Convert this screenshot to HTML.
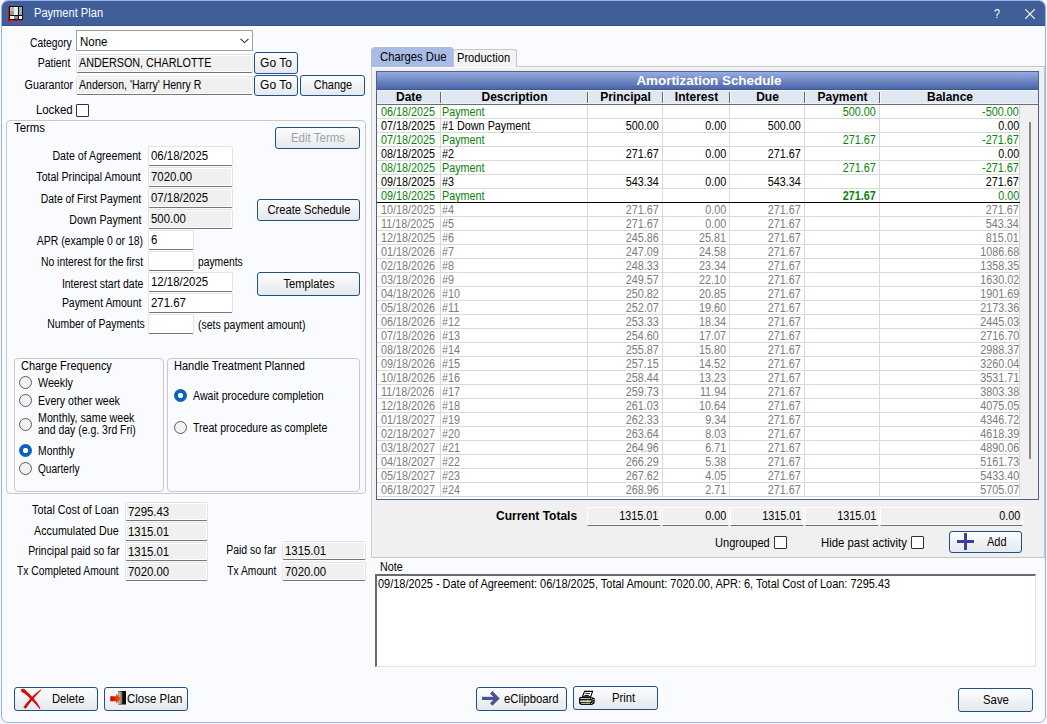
<!DOCTYPE html><html><head><meta charset="utf-8"><style>
*{margin:0;padding:0;box-sizing:border-box}
html,body{width:1047px;height:724px;overflow:hidden;background:#f8f8f8}
body{position:relative;font-family:"Liberation Sans",sans-serif;font-size:12px;color:#000}
div{position:absolute}
.t{white-space:nowrap;line-height:1}
.frame{left:1px;top:0;width:1045px;height:723px;background:#fafbfe;border:1px solid #9bb2e6;border-radius:7px}
.title{left:2px;top:1px;width:1043px;height:25px;background:#405e98;border-radius:6px 6px 0 0;border-bottom:1px solid #35528c}
.content{left:2px;top:26px;width:1043px;height:1px;background:#fff}
.btn{border:1px solid #1d4f88;border-radius:3px;background:linear-gradient(#fcfdfd,#e5e9ed)}
.tb{background:#fff;border:1px solid #e3e3e3;border-bottom:1px solid #767676;border-radius:2px;box-shadow:inset 1px 1px 0 #fff,inset -1px -1px 0 #fff}
.tb.ro{background:#f0f0f0}
.chk{background:#fff;border:1px solid #333;border-radius:1px}
.rad{border-radius:50%;border:1px solid #5a5a5a;background:#f2f2f2}
.rad.on{border:none;background:radial-gradient(circle,#fff 0,#fff 2.3px,#0b62c0 3px)}
.grp{border:1px solid #c9c9c9;border-radius:4px}
</style></head><body><div class="frame"></div>
<div class="title"></div>
<div class="content"></div>
<svg style="position:absolute;left:8px;top:6px" width="15" height="16" viewBox="0 0 15 16">
<rect x="0" y="1" width="1" height="15" fill="#e00"/><rect x="0" y="14" width="14" height="1" fill="#e00"/>
<rect x="1" y="0" width="14" height="14" fill="#111"/>
<rect x="2" y="1" width="4" height="4" fill="#bbb"/><rect x="6" y="1" width="4" height="8" fill="#eee"/><rect x="11" y="1" width="3" height="8" fill="#aaa"/>
<rect x="2" y="5" width="4" height="4" fill="#999"/>
<rect x="2" y="10" width="4" height="3" fill="#fff"/><rect x="6" y="10" width="4" height="3" fill="#888"/><rect x="11" y="10" width="3" height="3" fill="#fff"/>
</svg>
<div class="t" style="top:7px;font-size:12px;left:34px;transform-origin:0 0;transform:scaleX(0.9246575342465754);color:#fff;">Payment Plan</div>
<div class="t" style="top:8px;font-size:12px;left:994px;transform-origin:0 0;transform:scaleX(0.9);color:#fff;">?</div>
<svg style="position:absolute;left:1025px;top:9px" width="10" height="10" viewBox="0 0 10 10"><path d="M0.3 0.3L9.7 9.7M9.7 0.3L0.3 9.7" stroke="#fff" stroke-width="1.2"/></svg>
<div class="t" style="top:37px;font-size:12px;right:975px;transform-origin:100% 0;transform:scaleX(0.8541666666666666);">Category</div>
<div class="" style="left:76px;top:30px;width:177px;height:21px;background:#fff;border:1px solid #a0a0a0"></div>
<div class="t" style="top:36px;font-size:12px;left:80px;transform-origin:0 0;transform:scaleX(0.9555555555555556);">None</div>
<svg style="position:absolute;left:240px;top:38px" width="9" height="6" viewBox="0 0 9 6"><path d="M0.5 0.8L4.5 4.6L8.5 0.8" stroke="#333" stroke-width="1.1" fill="none"/></svg>
<div class="t" style="top:57px;font-size:12px;right:977px;transform-origin:100% 0;transform:scaleX(0.875);">Patient</div>
<div class="tb ro" style="left:76px;top:54px;width:177px;height:19px;"></div>
<div class="t" style="top:57px;font-size:12px;left:79px;transform-origin:0 0;transform:scaleX(0.8979591836734694);">ANDERSON, CHARLOTTE</div>
<div class="btn" style="left:254px;top:52px;width:44px;height:22px;"></div>
<div class="t" style="top:57px;font-size:12px;left:-24.0px;width:600px;text-align:center;transform-origin:50% 0;">Go To</div>
<div class="t" style="top:79px;font-size:12px;right:974px;transform-origin:100% 0;transform:scaleX(0.8962264150943396);">Guarantor</div>
<div class="tb ro" style="left:76px;top:76px;width:177px;height:19px;"></div>
<div class="t" style="top:79px;font-size:12px;left:79px;transform-origin:0 0;transform:scaleX(0.8776978417266187);">Anderson, 'Harry' Henry R</div>
<div class="btn" style="left:254px;top:75px;width:44px;height:21px;"></div>
<div class="t" style="top:79px;font-size:12px;left:-24.0px;width:600px;text-align:center;transform-origin:50% 0;">Go To</div>
<div class="btn" style="left:300px;top:75px;width:65px;height:21px;"></div>
<div class="t" style="top:79px;font-size:12px;left:32.5px;width:600px;text-align:center;transform-origin:50% 0;transform:scaleX(0.9097560975609755);">Change</div>
<div class="t" style="top:104px;font-size:12px;right:974px;transform-origin:100% 0;transform:scaleX(0.9513513513513514);">Locked</div>
<div class="chk" style="left:76px;top:104px;width:13px;height:13px;"></div>
<div class="grp" style="left:6px;top:120px;width:360px;height:374px;"></div>
<div class="t" style="top:122px;font-size:12px;left:14px;transform-origin:0 0;transform:scaleX(0.95);">Terms</div>
<div class="btn" style="left:275px;top:127px;width:85px;height:22px;"></div>
<div class="t" style="top:132px;font-size:12px;left:17.5px;width:600px;text-align:center;transform-origin:50% 0;transform:scaleX(0.9581818181818182);color:#a3a3a3;">Edit Terms</div>
<div class="t" style="top:150px;font-size:12px;right:905.5px;transform-origin:100% 0;transform:scaleX(0.8858585858585859);">Date of Agreement</div>
<div class="tb" style="left:148px;top:146px;width:85px;height:20px;"></div>
<div class="t" style="top:150px;font-size:12px;left:151px;transform-origin:0 0;transform:scaleX(0.95);">06/18/2025</div>
<div class="t" style="top:171px;font-size:12px;right:906px;transform-origin:100% 0;transform:scaleX(0.8789915966386554);">Total Principal Amount</div>
<div class="tb ro" style="left:148px;top:167px;width:85px;height:20px;"></div>
<div class="t" style="top:171px;font-size:12px;left:151px;transform-origin:0 0;transform:scaleX(0.95);">7020.00</div>
<div class="t" style="top:193px;font-size:12px;right:905.5px;transform-origin:100% 0;transform:scaleX(0.8643478260869566);">Date of First Payment</div>
<div class="tb ro" style="left:148px;top:188px;width:85px;height:20px;"></div>
<div class="t" style="top:192px;font-size:12px;left:151px;transform-origin:0 0;transform:scaleX(0.95);">07/18/2025</div>
<div class="t" style="top:214px;font-size:12px;right:905.5px;transform-origin:100% 0;transform:scaleX(0.885);">Down Payment</div>
<div class="tb ro" style="left:148px;top:209px;width:85px;height:20px;"></div>
<div class="t" style="top:213px;font-size:12px;left:151px;transform-origin:0 0;transform:scaleX(0.95);">500.00</div>
<div class="t" style="top:235px;font-size:12px;right:903.5px;transform-origin:100% 0;transform:scaleX(0.8710743801652893);">APR (example 0 or 18)</div>
<div class="tb" style="left:148px;top:230px;width:46px;height:20px;"></div>
<div class="t" style="top:234px;font-size:12px;left:151px;transform-origin:0 0;transform:scaleX(0.95);">6</div>
<div class="t" style="top:256px;font-size:12px;right:904px;transform-origin:100% 0;transform:scaleX(0.864957264957265);">No interest for the first</div>
<div class="tb" style="left:148px;top:251px;width:46px;height:20px;"></div>
<div class="t" style="top:278px;font-size:12px;right:904px;transform-origin:100% 0;transform:scaleX(0.8728260869565218);">Interest start date</div>
<div class="tb" style="left:148px;top:272px;width:85px;height:20px;"></div>
<div class="t" style="top:276px;font-size:12px;left:151px;transform-origin:0 0;transform:scaleX(0.95);">12/18/2025</div>
<div class="t" style="top:297px;font-size:12px;right:906px;transform-origin:100% 0;transform:scaleX(0.87);">Payment Amount</div>
<div class="tb" style="left:148px;top:293px;width:85px;height:20px;"></div>
<div class="t" style="top:297px;font-size:12px;left:151px;transform-origin:0 0;transform:scaleX(0.95);">271.67</div>
<div class="t" style="top:318px;font-size:12px;right:902px;transform-origin:100% 0;transform:scaleX(0.8648648648648649);">Number of Payments</div>
<div class="tb" style="left:148px;top:314px;width:46px;height:20px;"></div>
<div class="t" style="top:256px;font-size:12px;left:198px;transform-origin:0 0;transform:scaleX(0.8588235294117647);">payments</div>
<div class="t" style="top:319px;font-size:12px;left:198px;transform-origin:0 0;transform:scaleX(0.8760330578512396);">(sets payment amount)</div>
<div class="btn" style="left:257px;top:199px;width:103px;height:22px;"></div>
<div class="t" style="top:204px;font-size:12px;left:8.5px;width:600px;text-align:center;transform-origin:50% 0;transform:scaleX(0.928409090909091);">Create Schedule</div>
<div class="btn" style="left:257px;top:272px;width:103px;height:24px;"></div>
<div class="t" style="top:278px;font-size:12px;left:8.5px;width:600px;text-align:center;transform-origin:50% 0;transform:scaleX(0.9351851851851852);">Templates</div>
<div class="grp" style="left:14px;top:358px;width:150px;height:134px;"></div>
<div class="t" style="top:360px;font-size:12px;left:21px;transform-origin:0 0;transform:scaleX(0.9141414141414141);">Charge Frequency</div>
<div class="rad" style="left:19.0px;top:375.5px;width:13.0px;height:13.0px;"></div>
<div class="t" style="top:377px;font-size:12px;left:38px;transform-origin:0 0;transform:scaleX(0.8923076923076922);">Weekly</div>
<div class="rad" style="left:19.0px;top:394.0px;width:13.0px;height:13.0px;"></div>
<div class="t" style="top:394.5px;font-size:12px;left:38px;transform-origin:0 0;transform:scaleX(0.883695652173913);">Every other week</div>
<div class="rad" style="left:19.0px;top:417.5px;width:13.0px;height:13.0px;"></div>
<div class="rad on" style="left:19.0px;top:443.5px;width:13.0px;height:13.0px;"></div>
<div class="t" style="top:444.5px;font-size:12px;left:38px;transform-origin:0 0;transform:scaleX(0.8658536585365854);">Monthly</div>
<div class="rad" style="left:19.0px;top:461.5px;width:13.0px;height:13.0px;"></div>
<div class="t" style="top:462.5px;font-size:12px;left:38px;transform-origin:0 0;transform:scaleX(0.8428571428571427);">Quarterly</div>
<div class="t" style="top:412px;font-size:12px;left:38px;transform-origin:0 0;transform:scaleX(0.888785046728972);">Monthly, same week</div>
<div class="t" style="top:424px;font-size:12px;left:38px;transform-origin:0 0;transform:scaleX(0.872972972972973);">and day (e.g. 3rd Fri)</div>
<div class="grp" style="left:167px;top:358px;width:193px;height:134px;"></div>
<div class="t" style="top:360px;font-size:12px;left:174px;transform-origin:0 0;transform:scaleX(0.9170212765957447);">Handle Treatment Planned</div>
<div class="rad on" style="left:174.0px;top:389.0px;width:13.0px;height:13.0px;"></div>
<div class="t" style="top:390px;font-size:12px;left:193px;transform-origin:0 0;transform:scaleX(0.8829931972789117);">Await procedure completion</div>
<div class="rad" style="left:174.0px;top:421.0px;width:13.0px;height:13.0px;"></div>
<div class="t" style="top:422px;font-size:12px;left:193px;transform-origin:0 0;transform:scaleX(0.8784313725490196);">Treat procedure as complete</div>
<div class="t" style="top:504px;font-size:12px;right:928px;transform-origin:100% 0;transform:scaleX(0.8958333333333334);">Total Cost of Loan</div>
<div class="tb ro" style="left:125px;top:502px;width:83px;height:19px;"></div>
<div class="t" style="top:506px;font-size:12px;left:128px;transform-origin:0 0;transform:scaleX(0.95);">7295.43</div>
<div class="t" style="top:525px;font-size:12px;right:928px;transform-origin:100% 0;transform:scaleX(0.8936170212765957);">Accumulated Due</div>
<div class="tb ro" style="left:125px;top:522px;width:83px;height:19px;"></div>
<div class="t" style="top:526px;font-size:12px;left:128px;transform-origin:0 0;transform:scaleX(0.95);">1315.01</div>
<div class="t" style="top:545px;font-size:12px;right:928px;transform-origin:100% 0;transform:scaleX(0.8657142857142858);">Principal paid so far</div>
<div class="tb ro" style="left:125px;top:542px;width:83px;height:19px;"></div>
<div class="t" style="top:546px;font-size:12px;left:128px;transform-origin:0 0;transform:scaleX(0.95);">1315.01</div>
<div class="t" style="top:565px;font-size:12px;right:928px;transform-origin:100% 0;transform:scaleX(0.8563025210084034);">Tx Completed Amount</div>
<div class="tb ro" style="left:125px;top:562px;width:83px;height:19px;"></div>
<div class="t" style="top:566px;font-size:12px;left:128px;transform-origin:0 0;transform:scaleX(0.95);">7020.00</div>
<div class="t" style="top:544px;font-size:12px;right:771px;transform-origin:100% 0;transform:scaleX(0.875);">Paid so far</div>
<div class="tb ro" style="left:282px;top:541px;width:84px;height:19px;"></div>
<div class="t" style="top:545px;font-size:12px;left:285px;transform-origin:0 0;transform:scaleX(0.95);">1315.01</div>
<div class="t" style="top:565px;font-size:12px;right:771px;transform-origin:100% 0;transform:scaleX(0.8543859649122808);">Tx Amount</div>
<div class="tb ro" style="left:282px;top:562px;width:84px;height:19px;"></div>
<div class="t" style="top:566px;font-size:12px;left:285px;transform-origin:0 0;transform:scaleX(0.95);">7020.00</div>
<div style="left:371px;top:66px;width:674px;height:492px;background:#f0f0f0;border:1px solid #c6c6c6;box-shadow:inset 1px 1px 0 #fafafa"></div>
<div style="left:371px;top:47px;width:83px;height:20px;background:#a9bce6;border:1px solid #b4bccb;border-bottom:none;border-radius:4px 4px 0 0"></div>
<div style="left:453px;top:49px;width:64px;height:18px;background:#f3f3f3;border:1px solid #c6c6c6;border-bottom:none;border-radius:3px 3px 0 0"></div>
<div class="t" style="top:51px;font-size:12px;left:380px;transform-origin:0 0;transform:scaleX(0.9420289855072463);">Charges Due</div>
<div class="t" style="top:52px;font-size:12px;left:457px;transform-origin:0 0;transform:scaleX(0.9249999999999999);">Production</div>
<div style="left:376px;top:71px;width:663px;height:429px;background:#fff;border:1px solid #4d6190"></div>
<div style="left:377px;top:72px;width:661px;height:18px;background:linear-gradient(#96abe0,#4a66a9);border-bottom:1px solid #44578a"></div>
<div class="t" style="top:74px;font-size:13px;left:409px;width:600px;text-align:center;transform-origin:50% 0;transform:scaleX(1.03);font-weight:bold;color:#fff;">Amortization Schedule</div>
<div style="left:377px;top:90px;width:661px;height:15px;background:#dfe7f3;border-top:1px solid #f4f8fc;border-bottom:1px solid #6e6e6e;box-shadow:inset 0 -1px 0 #eef3f9"></div>
<div class="t" style="top:91px;font-size:12px;left:109.0px;width:600px;text-align:center;transform-origin:50% 0;font-weight:bold;">Date</div>
<div class="t" style="top:91px;font-size:12px;left:214.5px;width:600px;text-align:center;transform-origin:50% 0;font-weight:bold;">Description</div>
<div class="t" style="top:91px;font-size:12px;left:325.5px;width:600px;text-align:center;transform-origin:50% 0;font-weight:bold;">Principal</div>
<div class="t" style="top:91px;font-size:12px;left:396.5px;width:600px;text-align:center;transform-origin:50% 0;font-weight:bold;">Interest</div>
<div class="t" style="top:91px;font-size:12px;left:467.5px;width:600px;text-align:center;transform-origin:50% 0;font-weight:bold;">Due</div>
<div class="t" style="top:91px;font-size:12px;left:542.5px;width:600px;text-align:center;transform-origin:50% 0;font-weight:bold;">Payment</div>
<div class="t" style="top:91px;font-size:12px;left:650.0px;width:600px;text-align:center;transform-origin:50% 0;font-weight:bold;">Balance</div>
<div style="left:440px;top:92px;width:1px;height:11px;background:#666;box-shadow:1px 0 0 #f6f9fc"></div>
<div style="left:587px;top:92px;width:1px;height:11px;background:#666;box-shadow:1px 0 0 #f6f9fc"></div>
<div style="left:662px;top:92px;width:1px;height:11px;background:#666;box-shadow:1px 0 0 #f6f9fc"></div>
<div style="left:729px;top:92px;width:1px;height:11px;background:#666;box-shadow:1px 0 0 #f6f9fc"></div>
<div style="left:804px;top:92px;width:1px;height:11px;background:#666;box-shadow:1px 0 0 #f6f9fc"></div>
<div style="left:879px;top:92px;width:1px;height:11px;background:#666;box-shadow:1px 0 0 #f6f9fc"></div>
<div style="left:440px;top:105px;width:1px;height:392px;background:#d9d9d9"></div>
<div style="left:587px;top:105px;width:1px;height:392px;background:#d9d9d9"></div>
<div style="left:662px;top:105px;width:1px;height:392px;background:#d9d9d9"></div>
<div style="left:729px;top:105px;width:1px;height:392px;background:#d9d9d9"></div>
<div style="left:804px;top:105px;width:1px;height:392px;background:#d9d9d9"></div>
<div style="left:879px;top:105px;width:1px;height:392px;background:#d9d9d9"></div>
<div style="left:1019px;top:105px;width:1px;height:392px;background:#d9d9d9"></div>
<div style="left:377px;top:118px;width:643px;height:1px;background:#d9d9d9"></div>
<div class="t" style="top:106px;font-size:12px;left:381px;transform-origin:0 0;transform:scaleX(0.9);color:#0b820b;">06/18/2025</div>
<div class="t" style="top:106px;font-size:12px;left:442px;transform-origin:0 0;transform:scaleX(0.9);color:#0b820b;">Payment</div>
<div class="t" style="top:106px;font-size:12px;right:171px;transform-origin:100% 0;transform:scaleX(0.9);color:#0b820b;">500.00</div>
<div class="t" style="top:106px;font-size:12px;right:28px;transform-origin:100% 0;transform:scaleX(0.9);color:#0b820b;">-500.00</div>
<div style="left:377px;top:132px;width:643px;height:1px;background:#d9d9d9"></div>
<div class="t" style="top:120px;font-size:12px;left:381px;transform-origin:0 0;transform:scaleX(0.9);color:#000;">07/18/2025</div>
<div class="t" style="top:120px;font-size:12px;left:442px;transform-origin:0 0;transform:scaleX(0.9);color:#000;">#1 Down Payment</div>
<div class="t" style="top:120px;font-size:12px;right:388px;transform-origin:100% 0;transform:scaleX(0.9);color:#000;">500.00</div>
<div class="t" style="top:120px;font-size:12px;right:321px;transform-origin:100% 0;transform:scaleX(0.9);color:#000;">0.00</div>
<div class="t" style="top:120px;font-size:12px;right:246px;transform-origin:100% 0;transform:scaleX(0.9);color:#000;">500.00</div>
<div class="t" style="top:120px;font-size:12px;right:28px;transform-origin:100% 0;transform:scaleX(0.9);color:#000;">0.00</div>
<div style="left:377px;top:146px;width:643px;height:1px;background:#d9d9d9"></div>
<div class="t" style="top:134px;font-size:12px;left:381px;transform-origin:0 0;transform:scaleX(0.9);color:#0b820b;">07/18/2025</div>
<div class="t" style="top:134px;font-size:12px;left:442px;transform-origin:0 0;transform:scaleX(0.9);color:#0b820b;">Payment</div>
<div class="t" style="top:134px;font-size:12px;right:171px;transform-origin:100% 0;transform:scaleX(0.9);color:#0b820b;">271.67</div>
<div class="t" style="top:134px;font-size:12px;right:28px;transform-origin:100% 0;transform:scaleX(0.9);color:#0b820b;">-271.67</div>
<div style="left:377px;top:160px;width:643px;height:1px;background:#d9d9d9"></div>
<div class="t" style="top:148px;font-size:12px;left:381px;transform-origin:0 0;transform:scaleX(0.9);color:#000;">08/18/2025</div>
<div class="t" style="top:148px;font-size:12px;left:442px;transform-origin:0 0;transform:scaleX(0.9);color:#000;">#2</div>
<div class="t" style="top:148px;font-size:12px;right:388px;transform-origin:100% 0;transform:scaleX(0.9);color:#000;">271.67</div>
<div class="t" style="top:148px;font-size:12px;right:321px;transform-origin:100% 0;transform:scaleX(0.9);color:#000;">0.00</div>
<div class="t" style="top:148px;font-size:12px;right:246px;transform-origin:100% 0;transform:scaleX(0.9);color:#000;">271.67</div>
<div class="t" style="top:148px;font-size:12px;right:28px;transform-origin:100% 0;transform:scaleX(0.9);color:#000;">0.00</div>
<div style="left:377px;top:174px;width:643px;height:1px;background:#d9d9d9"></div>
<div class="t" style="top:162px;font-size:12px;left:381px;transform-origin:0 0;transform:scaleX(0.9);color:#0b820b;">08/18/2025</div>
<div class="t" style="top:162px;font-size:12px;left:442px;transform-origin:0 0;transform:scaleX(0.9);color:#0b820b;">Payment</div>
<div class="t" style="top:162px;font-size:12px;right:171px;transform-origin:100% 0;transform:scaleX(0.9);color:#0b820b;">271.67</div>
<div class="t" style="top:162px;font-size:12px;right:28px;transform-origin:100% 0;transform:scaleX(0.9);color:#0b820b;">-271.67</div>
<div style="left:377px;top:188px;width:643px;height:1px;background:#d9d9d9"></div>
<div class="t" style="top:176px;font-size:12px;left:381px;transform-origin:0 0;transform:scaleX(0.9);color:#000;">09/18/2025</div>
<div class="t" style="top:176px;font-size:12px;left:442px;transform-origin:0 0;transform:scaleX(0.9);color:#000;">#3</div>
<div class="t" style="top:176px;font-size:12px;right:388px;transform-origin:100% 0;transform:scaleX(0.9);color:#000;">543.34</div>
<div class="t" style="top:176px;font-size:12px;right:321px;transform-origin:100% 0;transform:scaleX(0.9);color:#000;">0.00</div>
<div class="t" style="top:176px;font-size:12px;right:246px;transform-origin:100% 0;transform:scaleX(0.9);color:#000;">543.34</div>
<div class="t" style="top:176px;font-size:12px;right:28px;transform-origin:100% 0;transform:scaleX(0.9);color:#000;">271.67</div>
<div style="left:377px;top:202px;width:643px;height:1px;background:#000"></div>
<div class="t" style="top:190px;font-size:12px;left:381px;transform-origin:0 0;transform:scaleX(0.9);color:#0b820b;">09/18/2025</div>
<div class="t" style="top:190px;font-size:12px;left:442px;transform-origin:0 0;transform:scaleX(0.9);color:#0b820b;">Payment</div>
<div class="t" style="top:190px;font-size:12px;right:171px;transform-origin:100% 0;transform:scaleX(0.9);color:#0b820b;"><b>271.67</b></div>
<div class="t" style="top:190px;font-size:12px;right:28px;transform-origin:100% 0;transform:scaleX(0.9);color:#0b820b;">0.00</div>
<div style="left:377px;top:216px;width:643px;height:1px;background:#d9d9d9"></div>
<div class="t" style="top:204px;font-size:12px;left:381px;transform-origin:0 0;transform:scaleX(0.9);color:#7c7c7c;">10/18/2025</div>
<div class="t" style="top:204px;font-size:12px;left:442px;transform-origin:0 0;transform:scaleX(0.9);color:#7c7c7c;">#4</div>
<div class="t" style="top:204px;font-size:12px;right:388px;transform-origin:100% 0;transform:scaleX(0.9);color:#7c7c7c;">271.67</div>
<div class="t" style="top:204px;font-size:12px;right:321px;transform-origin:100% 0;transform:scaleX(0.9);color:#7c7c7c;">0.00</div>
<div class="t" style="top:204px;font-size:12px;right:246px;transform-origin:100% 0;transform:scaleX(0.9);color:#7c7c7c;">271.67</div>
<div class="t" style="top:204px;font-size:12px;right:28px;transform-origin:100% 0;transform:scaleX(0.9);color:#7c7c7c;">271.67</div>
<div style="left:377px;top:230px;width:643px;height:1px;background:#d9d9d9"></div>
<div class="t" style="top:218px;font-size:12px;left:381px;transform-origin:0 0;transform:scaleX(0.9);color:#7c7c7c;">11/18/2025</div>
<div class="t" style="top:218px;font-size:12px;left:442px;transform-origin:0 0;transform:scaleX(0.9);color:#7c7c7c;">#5</div>
<div class="t" style="top:218px;font-size:12px;right:388px;transform-origin:100% 0;transform:scaleX(0.9);color:#7c7c7c;">271.67</div>
<div class="t" style="top:218px;font-size:12px;right:321px;transform-origin:100% 0;transform:scaleX(0.9);color:#7c7c7c;">0.00</div>
<div class="t" style="top:218px;font-size:12px;right:246px;transform-origin:100% 0;transform:scaleX(0.9);color:#7c7c7c;">271.67</div>
<div class="t" style="top:218px;font-size:12px;right:28px;transform-origin:100% 0;transform:scaleX(0.9);color:#7c7c7c;">543.34</div>
<div style="left:377px;top:244px;width:643px;height:1px;background:#d9d9d9"></div>
<div class="t" style="top:232px;font-size:12px;left:381px;transform-origin:0 0;transform:scaleX(0.9);color:#7c7c7c;">12/18/2025</div>
<div class="t" style="top:232px;font-size:12px;left:442px;transform-origin:0 0;transform:scaleX(0.9);color:#7c7c7c;">#6</div>
<div class="t" style="top:232px;font-size:12px;right:388px;transform-origin:100% 0;transform:scaleX(0.9);color:#7c7c7c;">245.86</div>
<div class="t" style="top:232px;font-size:12px;right:321px;transform-origin:100% 0;transform:scaleX(0.9);color:#7c7c7c;">25.81</div>
<div class="t" style="top:232px;font-size:12px;right:246px;transform-origin:100% 0;transform:scaleX(0.9);color:#7c7c7c;">271.67</div>
<div class="t" style="top:232px;font-size:12px;right:28px;transform-origin:100% 0;transform:scaleX(0.9);color:#7c7c7c;">815.01</div>
<div style="left:377px;top:258px;width:643px;height:1px;background:#d9d9d9"></div>
<div class="t" style="top:246px;font-size:12px;left:381px;transform-origin:0 0;transform:scaleX(0.9);color:#7c7c7c;">01/18/2026</div>
<div class="t" style="top:246px;font-size:12px;left:442px;transform-origin:0 0;transform:scaleX(0.9);color:#7c7c7c;">#7</div>
<div class="t" style="top:246px;font-size:12px;right:388px;transform-origin:100% 0;transform:scaleX(0.9);color:#7c7c7c;">247.09</div>
<div class="t" style="top:246px;font-size:12px;right:321px;transform-origin:100% 0;transform:scaleX(0.9);color:#7c7c7c;">24.58</div>
<div class="t" style="top:246px;font-size:12px;right:246px;transform-origin:100% 0;transform:scaleX(0.9);color:#7c7c7c;">271.67</div>
<div class="t" style="top:246px;font-size:12px;right:28px;transform-origin:100% 0;transform:scaleX(0.9);color:#7c7c7c;">1086.68</div>
<div style="left:377px;top:272px;width:643px;height:1px;background:#d9d9d9"></div>
<div class="t" style="top:260px;font-size:12px;left:381px;transform-origin:0 0;transform:scaleX(0.9);color:#7c7c7c;">02/18/2026</div>
<div class="t" style="top:260px;font-size:12px;left:442px;transform-origin:0 0;transform:scaleX(0.9);color:#7c7c7c;">#8</div>
<div class="t" style="top:260px;font-size:12px;right:388px;transform-origin:100% 0;transform:scaleX(0.9);color:#7c7c7c;">248.33</div>
<div class="t" style="top:260px;font-size:12px;right:321px;transform-origin:100% 0;transform:scaleX(0.9);color:#7c7c7c;">23.34</div>
<div class="t" style="top:260px;font-size:12px;right:246px;transform-origin:100% 0;transform:scaleX(0.9);color:#7c7c7c;">271.67</div>
<div class="t" style="top:260px;font-size:12px;right:28px;transform-origin:100% 0;transform:scaleX(0.9);color:#7c7c7c;">1358.35</div>
<div style="left:377px;top:286px;width:643px;height:1px;background:#d9d9d9"></div>
<div class="t" style="top:274px;font-size:12px;left:381px;transform-origin:0 0;transform:scaleX(0.9);color:#7c7c7c;">03/18/2026</div>
<div class="t" style="top:274px;font-size:12px;left:442px;transform-origin:0 0;transform:scaleX(0.9);color:#7c7c7c;">#9</div>
<div class="t" style="top:274px;font-size:12px;right:388px;transform-origin:100% 0;transform:scaleX(0.9);color:#7c7c7c;">249.57</div>
<div class="t" style="top:274px;font-size:12px;right:321px;transform-origin:100% 0;transform:scaleX(0.9);color:#7c7c7c;">22.10</div>
<div class="t" style="top:274px;font-size:12px;right:246px;transform-origin:100% 0;transform:scaleX(0.9);color:#7c7c7c;">271.67</div>
<div class="t" style="top:274px;font-size:12px;right:28px;transform-origin:100% 0;transform:scaleX(0.9);color:#7c7c7c;">1630.02</div>
<div style="left:377px;top:300px;width:643px;height:1px;background:#d9d9d9"></div>
<div class="t" style="top:288px;font-size:12px;left:381px;transform-origin:0 0;transform:scaleX(0.9);color:#7c7c7c;">04/18/2026</div>
<div class="t" style="top:288px;font-size:12px;left:442px;transform-origin:0 0;transform:scaleX(0.9);color:#7c7c7c;">#10</div>
<div class="t" style="top:288px;font-size:12px;right:388px;transform-origin:100% 0;transform:scaleX(0.9);color:#7c7c7c;">250.82</div>
<div class="t" style="top:288px;font-size:12px;right:321px;transform-origin:100% 0;transform:scaleX(0.9);color:#7c7c7c;">20.85</div>
<div class="t" style="top:288px;font-size:12px;right:246px;transform-origin:100% 0;transform:scaleX(0.9);color:#7c7c7c;">271.67</div>
<div class="t" style="top:288px;font-size:12px;right:28px;transform-origin:100% 0;transform:scaleX(0.9);color:#7c7c7c;">1901.69</div>
<div style="left:377px;top:314px;width:643px;height:1px;background:#d9d9d9"></div>
<div class="t" style="top:302px;font-size:12px;left:381px;transform-origin:0 0;transform:scaleX(0.9);color:#7c7c7c;">05/18/2026</div>
<div class="t" style="top:302px;font-size:12px;left:442px;transform-origin:0 0;transform:scaleX(0.9);color:#7c7c7c;">#11</div>
<div class="t" style="top:302px;font-size:12px;right:388px;transform-origin:100% 0;transform:scaleX(0.9);color:#7c7c7c;">252.07</div>
<div class="t" style="top:302px;font-size:12px;right:321px;transform-origin:100% 0;transform:scaleX(0.9);color:#7c7c7c;">19.60</div>
<div class="t" style="top:302px;font-size:12px;right:246px;transform-origin:100% 0;transform:scaleX(0.9);color:#7c7c7c;">271.67</div>
<div class="t" style="top:302px;font-size:12px;right:28px;transform-origin:100% 0;transform:scaleX(0.9);color:#7c7c7c;">2173.36</div>
<div style="left:377px;top:328px;width:643px;height:1px;background:#d9d9d9"></div>
<div class="t" style="top:316px;font-size:12px;left:381px;transform-origin:0 0;transform:scaleX(0.9);color:#7c7c7c;">06/18/2026</div>
<div class="t" style="top:316px;font-size:12px;left:442px;transform-origin:0 0;transform:scaleX(0.9);color:#7c7c7c;">#12</div>
<div class="t" style="top:316px;font-size:12px;right:388px;transform-origin:100% 0;transform:scaleX(0.9);color:#7c7c7c;">253.33</div>
<div class="t" style="top:316px;font-size:12px;right:321px;transform-origin:100% 0;transform:scaleX(0.9);color:#7c7c7c;">18.34</div>
<div class="t" style="top:316px;font-size:12px;right:246px;transform-origin:100% 0;transform:scaleX(0.9);color:#7c7c7c;">271.67</div>
<div class="t" style="top:316px;font-size:12px;right:28px;transform-origin:100% 0;transform:scaleX(0.9);color:#7c7c7c;">2445.03</div>
<div style="left:377px;top:342px;width:643px;height:1px;background:#d9d9d9"></div>
<div class="t" style="top:330px;font-size:12px;left:381px;transform-origin:0 0;transform:scaleX(0.9);color:#7c7c7c;">07/18/2026</div>
<div class="t" style="top:330px;font-size:12px;left:442px;transform-origin:0 0;transform:scaleX(0.9);color:#7c7c7c;">#13</div>
<div class="t" style="top:330px;font-size:12px;right:388px;transform-origin:100% 0;transform:scaleX(0.9);color:#7c7c7c;">254.60</div>
<div class="t" style="top:330px;font-size:12px;right:321px;transform-origin:100% 0;transform:scaleX(0.9);color:#7c7c7c;">17.07</div>
<div class="t" style="top:330px;font-size:12px;right:246px;transform-origin:100% 0;transform:scaleX(0.9);color:#7c7c7c;">271.67</div>
<div class="t" style="top:330px;font-size:12px;right:28px;transform-origin:100% 0;transform:scaleX(0.9);color:#7c7c7c;">2716.70</div>
<div style="left:377px;top:356px;width:643px;height:1px;background:#d9d9d9"></div>
<div class="t" style="top:344px;font-size:12px;left:381px;transform-origin:0 0;transform:scaleX(0.9);color:#7c7c7c;">08/18/2026</div>
<div class="t" style="top:344px;font-size:12px;left:442px;transform-origin:0 0;transform:scaleX(0.9);color:#7c7c7c;">#14</div>
<div class="t" style="top:344px;font-size:12px;right:388px;transform-origin:100% 0;transform:scaleX(0.9);color:#7c7c7c;">255.87</div>
<div class="t" style="top:344px;font-size:12px;right:321px;transform-origin:100% 0;transform:scaleX(0.9);color:#7c7c7c;">15.80</div>
<div class="t" style="top:344px;font-size:12px;right:246px;transform-origin:100% 0;transform:scaleX(0.9);color:#7c7c7c;">271.67</div>
<div class="t" style="top:344px;font-size:12px;right:28px;transform-origin:100% 0;transform:scaleX(0.9);color:#7c7c7c;">2988.37</div>
<div style="left:377px;top:370px;width:643px;height:1px;background:#d9d9d9"></div>
<div class="t" style="top:358px;font-size:12px;left:381px;transform-origin:0 0;transform:scaleX(0.9);color:#7c7c7c;">09/18/2026</div>
<div class="t" style="top:358px;font-size:12px;left:442px;transform-origin:0 0;transform:scaleX(0.9);color:#7c7c7c;">#15</div>
<div class="t" style="top:358px;font-size:12px;right:388px;transform-origin:100% 0;transform:scaleX(0.9);color:#7c7c7c;">257.15</div>
<div class="t" style="top:358px;font-size:12px;right:321px;transform-origin:100% 0;transform:scaleX(0.9);color:#7c7c7c;">14.52</div>
<div class="t" style="top:358px;font-size:12px;right:246px;transform-origin:100% 0;transform:scaleX(0.9);color:#7c7c7c;">271.67</div>
<div class="t" style="top:358px;font-size:12px;right:28px;transform-origin:100% 0;transform:scaleX(0.9);color:#7c7c7c;">3260.04</div>
<div style="left:377px;top:384px;width:643px;height:1px;background:#d9d9d9"></div>
<div class="t" style="top:372px;font-size:12px;left:381px;transform-origin:0 0;transform:scaleX(0.9);color:#7c7c7c;">10/18/2026</div>
<div class="t" style="top:372px;font-size:12px;left:442px;transform-origin:0 0;transform:scaleX(0.9);color:#7c7c7c;">#16</div>
<div class="t" style="top:372px;font-size:12px;right:388px;transform-origin:100% 0;transform:scaleX(0.9);color:#7c7c7c;">258.44</div>
<div class="t" style="top:372px;font-size:12px;right:321px;transform-origin:100% 0;transform:scaleX(0.9);color:#7c7c7c;">13.23</div>
<div class="t" style="top:372px;font-size:12px;right:246px;transform-origin:100% 0;transform:scaleX(0.9);color:#7c7c7c;">271.67</div>
<div class="t" style="top:372px;font-size:12px;right:28px;transform-origin:100% 0;transform:scaleX(0.9);color:#7c7c7c;">3531.71</div>
<div style="left:377px;top:398px;width:643px;height:1px;background:#d9d9d9"></div>
<div class="t" style="top:386px;font-size:12px;left:381px;transform-origin:0 0;transform:scaleX(0.9);color:#7c7c7c;">11/18/2026</div>
<div class="t" style="top:386px;font-size:12px;left:442px;transform-origin:0 0;transform:scaleX(0.9);color:#7c7c7c;">#17</div>
<div class="t" style="top:386px;font-size:12px;right:388px;transform-origin:100% 0;transform:scaleX(0.9);color:#7c7c7c;">259.73</div>
<div class="t" style="top:386px;font-size:12px;right:321px;transform-origin:100% 0;transform:scaleX(0.9);color:#7c7c7c;">11.94</div>
<div class="t" style="top:386px;font-size:12px;right:246px;transform-origin:100% 0;transform:scaleX(0.9);color:#7c7c7c;">271.67</div>
<div class="t" style="top:386px;font-size:12px;right:28px;transform-origin:100% 0;transform:scaleX(0.9);color:#7c7c7c;">3803.38</div>
<div style="left:377px;top:412px;width:643px;height:1px;background:#d9d9d9"></div>
<div class="t" style="top:400px;font-size:12px;left:381px;transform-origin:0 0;transform:scaleX(0.9);color:#7c7c7c;">12/18/2026</div>
<div class="t" style="top:400px;font-size:12px;left:442px;transform-origin:0 0;transform:scaleX(0.9);color:#7c7c7c;">#18</div>
<div class="t" style="top:400px;font-size:12px;right:388px;transform-origin:100% 0;transform:scaleX(0.9);color:#7c7c7c;">261.03</div>
<div class="t" style="top:400px;font-size:12px;right:321px;transform-origin:100% 0;transform:scaleX(0.9);color:#7c7c7c;">10.64</div>
<div class="t" style="top:400px;font-size:12px;right:246px;transform-origin:100% 0;transform:scaleX(0.9);color:#7c7c7c;">271.67</div>
<div class="t" style="top:400px;font-size:12px;right:28px;transform-origin:100% 0;transform:scaleX(0.9);color:#7c7c7c;">4075.05</div>
<div style="left:377px;top:426px;width:643px;height:1px;background:#d9d9d9"></div>
<div class="t" style="top:414px;font-size:12px;left:381px;transform-origin:0 0;transform:scaleX(0.9);color:#7c7c7c;">01/18/2027</div>
<div class="t" style="top:414px;font-size:12px;left:442px;transform-origin:0 0;transform:scaleX(0.9);color:#7c7c7c;">#19</div>
<div class="t" style="top:414px;font-size:12px;right:388px;transform-origin:100% 0;transform:scaleX(0.9);color:#7c7c7c;">262.33</div>
<div class="t" style="top:414px;font-size:12px;right:321px;transform-origin:100% 0;transform:scaleX(0.9);color:#7c7c7c;">9.34</div>
<div class="t" style="top:414px;font-size:12px;right:246px;transform-origin:100% 0;transform:scaleX(0.9);color:#7c7c7c;">271.67</div>
<div class="t" style="top:414px;font-size:12px;right:28px;transform-origin:100% 0;transform:scaleX(0.9);color:#7c7c7c;">4346.72</div>
<div style="left:377px;top:440px;width:643px;height:1px;background:#d9d9d9"></div>
<div class="t" style="top:428px;font-size:12px;left:381px;transform-origin:0 0;transform:scaleX(0.9);color:#7c7c7c;">02/18/2027</div>
<div class="t" style="top:428px;font-size:12px;left:442px;transform-origin:0 0;transform:scaleX(0.9);color:#7c7c7c;">#20</div>
<div class="t" style="top:428px;font-size:12px;right:388px;transform-origin:100% 0;transform:scaleX(0.9);color:#7c7c7c;">263.64</div>
<div class="t" style="top:428px;font-size:12px;right:321px;transform-origin:100% 0;transform:scaleX(0.9);color:#7c7c7c;">8.03</div>
<div class="t" style="top:428px;font-size:12px;right:246px;transform-origin:100% 0;transform:scaleX(0.9);color:#7c7c7c;">271.67</div>
<div class="t" style="top:428px;font-size:12px;right:28px;transform-origin:100% 0;transform:scaleX(0.9);color:#7c7c7c;">4618.39</div>
<div style="left:377px;top:454px;width:643px;height:1px;background:#d9d9d9"></div>
<div class="t" style="top:442px;font-size:12px;left:381px;transform-origin:0 0;transform:scaleX(0.9);color:#7c7c7c;">03/18/2027</div>
<div class="t" style="top:442px;font-size:12px;left:442px;transform-origin:0 0;transform:scaleX(0.9);color:#7c7c7c;">#21</div>
<div class="t" style="top:442px;font-size:12px;right:388px;transform-origin:100% 0;transform:scaleX(0.9);color:#7c7c7c;">264.96</div>
<div class="t" style="top:442px;font-size:12px;right:321px;transform-origin:100% 0;transform:scaleX(0.9);color:#7c7c7c;">6.71</div>
<div class="t" style="top:442px;font-size:12px;right:246px;transform-origin:100% 0;transform:scaleX(0.9);color:#7c7c7c;">271.67</div>
<div class="t" style="top:442px;font-size:12px;right:28px;transform-origin:100% 0;transform:scaleX(0.9);color:#7c7c7c;">4890.06</div>
<div style="left:377px;top:468px;width:643px;height:1px;background:#d9d9d9"></div>
<div class="t" style="top:456px;font-size:12px;left:381px;transform-origin:0 0;transform:scaleX(0.9);color:#7c7c7c;">04/18/2027</div>
<div class="t" style="top:456px;font-size:12px;left:442px;transform-origin:0 0;transform:scaleX(0.9);color:#7c7c7c;">#22</div>
<div class="t" style="top:456px;font-size:12px;right:388px;transform-origin:100% 0;transform:scaleX(0.9);color:#7c7c7c;">266.29</div>
<div class="t" style="top:456px;font-size:12px;right:321px;transform-origin:100% 0;transform:scaleX(0.9);color:#7c7c7c;">5.38</div>
<div class="t" style="top:456px;font-size:12px;right:246px;transform-origin:100% 0;transform:scaleX(0.9);color:#7c7c7c;">271.67</div>
<div class="t" style="top:456px;font-size:12px;right:28px;transform-origin:100% 0;transform:scaleX(0.9);color:#7c7c7c;">5161.73</div>
<div style="left:377px;top:482px;width:643px;height:1px;background:#d9d9d9"></div>
<div class="t" style="top:470px;font-size:12px;left:381px;transform-origin:0 0;transform:scaleX(0.9);color:#7c7c7c;">05/18/2027</div>
<div class="t" style="top:470px;font-size:12px;left:442px;transform-origin:0 0;transform:scaleX(0.9);color:#7c7c7c;">#23</div>
<div class="t" style="top:470px;font-size:12px;right:388px;transform-origin:100% 0;transform:scaleX(0.9);color:#7c7c7c;">267.62</div>
<div class="t" style="top:470px;font-size:12px;right:321px;transform-origin:100% 0;transform:scaleX(0.9);color:#7c7c7c;">4.05</div>
<div class="t" style="top:470px;font-size:12px;right:246px;transform-origin:100% 0;transform:scaleX(0.9);color:#7c7c7c;">271.67</div>
<div class="t" style="top:470px;font-size:12px;right:28px;transform-origin:100% 0;transform:scaleX(0.9);color:#7c7c7c;">5433.40</div>
<div style="left:377px;top:496px;width:643px;height:1px;background:#d9d9d9"></div>
<div class="t" style="top:484px;font-size:12px;left:381px;transform-origin:0 0;transform:scaleX(0.9);color:#7c7c7c;">06/18/2027</div>
<div class="t" style="top:484px;font-size:12px;left:442px;transform-origin:0 0;transform:scaleX(0.9);color:#7c7c7c;">#24</div>
<div class="t" style="top:484px;font-size:12px;right:388px;transform-origin:100% 0;transform:scaleX(0.9);color:#7c7c7c;">268.96</div>
<div class="t" style="top:484px;font-size:12px;right:321px;transform-origin:100% 0;transform:scaleX(0.9);color:#7c7c7c;">2.71</div>
<div class="t" style="top:484px;font-size:12px;right:246px;transform-origin:100% 0;transform:scaleX(0.9);color:#7c7c7c;">271.67</div>
<div class="t" style="top:484px;font-size:12px;right:28px;transform-origin:100% 0;transform:scaleX(0.9);color:#7c7c7c;">5705.07</div>
<div style="left:1020px;top:105px;width:18px;height:394px;background:#f0f0f0"></div>
<div style="left:1029px;top:122px;width:2px;height:337px;background:#858585"></div>
<div class="t" style="top:510px;font-size:12px;left:496px;transform-origin:0 0;font-weight:bold;">Current Totals</div>
<div style="left:587px;top:507px;width:74px;height:19px;background:#f0f0f0;border:1px solid #fff;border-bottom:1px solid #707070;box-shadow:inset 0 -1px 0 #fff;border-radius:1px"></div>
<div class="t" style="top:510px;font-size:12px;right:389px;transform-origin:100% 0;transform:scaleX(0.9);">1315.01</div>
<div style="left:662px;top:507px;width:67px;height:19px;background:#f0f0f0;border:1px solid #fff;border-bottom:1px solid #707070;box-shadow:inset 0 -1px 0 #fff;border-radius:1px"></div>
<div class="t" style="top:510px;font-size:12px;right:321px;transform-origin:100% 0;transform:scaleX(0.9);">0.00</div>
<div style="left:730px;top:507px;width:74px;height:19px;background:#f0f0f0;border:1px solid #fff;border-bottom:1px solid #707070;box-shadow:inset 0 -1px 0 #fff;border-radius:1px"></div>
<div class="t" style="top:510px;font-size:12px;right:246px;transform-origin:100% 0;transform:scaleX(0.9);">1315.01</div>
<div style="left:805px;top:507px;width:74px;height:19px;background:#f0f0f0;border:1px solid #fff;border-bottom:1px solid #707070;box-shadow:inset 0 -1px 0 #fff;border-radius:1px"></div>
<div class="t" style="top:510px;font-size:12px;right:171px;transform-origin:100% 0;transform:scaleX(0.9);">1315.01</div>
<div style="left:880px;top:507px;width:143px;height:19px;background:#f0f0f0;border:1px solid #fff;border-bottom:1px solid #707070;box-shadow:inset 0 -1px 0 #fff;border-radius:1px"></div>
<div class="t" style="top:510px;font-size:12px;right:27px;transform-origin:100% 0;transform:scaleX(0.9);">0.00</div>
<div class="t" style="top:537px;font-size:12px;left:715px;transform-origin:0 0;transform:scaleX(0.9224137931034483);">Ungrouped</div>
<div class="chk" style="left:774px;top:536px;width:13px;height:13px;"></div>
<div class="t" style="top:537px;font-size:12px;left:821px;transform-origin:0 0;transform:scaleX(0.9466666666666667);">Hide past activity</div>
<div class="chk" style="left:911px;top:536px;width:13px;height:13px;"></div>
<div class="btn" style="left:949px;top:531px;width:73px;height:22px;"></div>
<svg style="position:absolute;left:957px;top:533px" width="17" height="17" viewBox="0 0 17 17"><path d="M8.5 0V17M0 8.5H17" stroke="#3b3f9c" stroke-width="3"/></svg>
<div class="t" style="top:536px;font-size:12px;left:987px;transform-origin:0 0;transform:scaleX(0.9142857142857143);">Add</div>
<div class="t" style="top:561px;font-size:12px;left:380px;transform-origin:0 0;transform:scaleX(0.8916666666666666);">Note</div>
<div style="left:375px;top:574px;width:661px;height:93px;background:#fff;border-top:2px solid #6b6b6b;border-left:2px solid #6b6b6b;border-right:1px solid #e3e3e3;border-bottom:1px solid #e3e3e3"></div>
<div class="t" style="top:578px;font-size:12px;left:378px;transform-origin:0 0;transform:scaleX(0.9133928571428571);">09/18/2025 - Date of Agreement: 06/18/2025, Total Amount: 7020.00, APR: 6, Total Cost of Loan: 7295.43</div>
<div class="btn" style="left:14px;top:687px;width:84px;height:24px;"></div>
<svg style="position:absolute;left:15px;top:686px" width="30" height="26" viewBox="0 0 30 26"><path d="M6 3.3C7 2.6 8.6 2.5 9.6 3.2L14 7.5L18.5 12.3L22.5 17.3L25.4 22.3L24.6 22.9L20.8 18.6L16.2 13.8L11.6 9.2C9.6 7.3 7.8 6.4 6.4 5.9Z" fill="#d20e0e"/><path d="M25.6 3.6L26.1 4.2L21.4 9.2L16.6 14.8L12.5 20.2L10.6 22.8L8.3 21.3L11.8 16.8L16.3 11.6L20.8 7.3Z" fill="#d20e0e"/></svg>
<div class="t" style="top:693px;font-size:12px;left:52px;transform-origin:0 0;transform:scaleX(0.9363636363636363);">Delete</div>
<div class="btn" style="left:104px;top:687px;width:84px;height:24px;"></div>
<svg style="position:absolute;left:104px;top:686px" width="30" height="26" viewBox="0 0 30 26"><defs><linearGradient id="dr" x1="0" x2="1"><stop offset="0" stop-color="#d8d0bc"/><stop offset="1" stop-color="#6e6656"/></linearGradient><linearGradient id="ar" x1="0" x2="1"><stop offset="0" stop-color="#c80000"/><stop offset="1" stop-color="#ff5a14"/></linearGradient></defs><rect x="14" y="5" width="8" height="13.5" fill="#0c0c0c"/><path d="M14.2 5.3L18.3 5.8V17.8L14.2 18.6Z" fill="url(#dr)"/><path d="M6.3 10.2H12.2V7.7L16.9 12.5L12.2 17.6V15.3H6.3Z" fill="url(#ar)"/></svg>
<div class="t" style="top:693px;font-size:12px;left:127px;transform-origin:0 0;transform:scaleX(0.9553571428571429);">Close Plan</div>
<div class="btn" style="left:476px;top:687px;width:91px;height:24px;"></div>
<svg style="position:absolute;left:476px;top:686px" width="30" height="26" viewBox="0 0 30 26"><path d="M6 12.4H20" stroke="#4d5290" stroke-width="3.2" fill="none"/><path d="M15.2 6.3L21.3 12.4L15.2 18.5" stroke="#4d5290" stroke-width="3.4" fill="none"/></svg>
<div class="t" style="top:693px;font-size:12px;left:504px;transform-origin:0 0;transform:scaleX(0.9403508771929825);">eClipboard</div>
<div class="btn" style="left:573px;top:686px;width:85px;height:24px;"></div>
<svg style="position:absolute;left:574px;top:686px" width="30" height="26" viewBox="0 0 30 26"><path d="M10.6 5.4H18.6L16.6 10.9H8.4Z" fill="#fff" stroke="#000" stroke-width="1.1"/><path d="M11.3 7.6H15.8M10.4 9.5H14.8" stroke="#000" stroke-width="0.9"/><path d="M6 11H17.2L20.6 12V17.2L18 18.9H7L5.1 17.6V12.2Z" fill="#000"/><rect x="6.3" y="12.1" width="10" height="1" fill="#d8d8d8"/><rect x="6.2" y="14.4" width="10.6" height="1.8" fill="#dcdce6"/><rect x="12" y="14.4" width="3.2" height="1.8" fill="#e8e800"/><rect x="7.2" y="17.2" width="9" height="0.9" fill="#d8d8d8"/><rect x="17.2" y="11.8" width="1" height="1" fill="#fff"/><rect x="18.7" y="13" width="1" height="1" fill="#fff"/><rect x="17.4" y="14.2" width="1" height="1" fill="#fff"/><rect x="18.4" y="15.6" width="1" height="1" fill="#fff"/><rect x="17.2" y="17.2" width="1" height="1" fill="#fff"/></svg>
<div class="t" style="top:692px;font-size:12px;left:612px;transform-origin:0 0;transform:scaleX(0.9375);">Print</div>
<div class="btn" style="left:958px;top:688px;width:75px;height:24px;"></div>
<div class="t" style="top:694px;font-size:12px;left:983px;transform-origin:0 0;transform:scaleX(0.9461538461538462);">Save</div></body></html>
